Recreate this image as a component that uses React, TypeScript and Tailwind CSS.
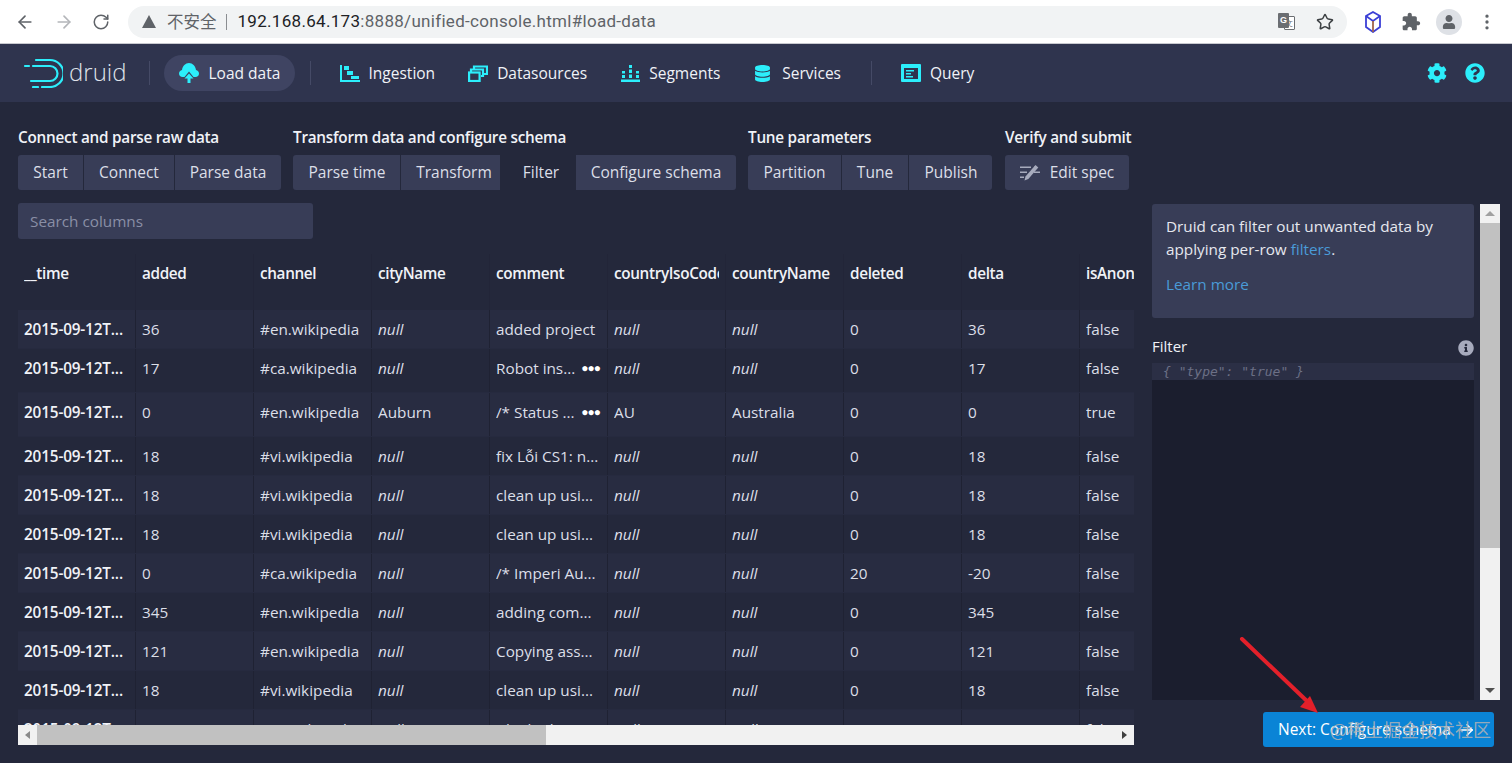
import { ArrowLeft, ArrowRight, RotateCw, Star, EllipsisVertical } from "lucide-react"
import { FaCog, FaDatabase, FaInfoCircle, FaQuestionCircle, FaUser } from "react-icons/fa"

const columns = ["__time", "added", "channel", "cityName", "comment", "countryIsoCode", "countryName", "deleted", "delta", "isAnonymous"]

const rows = [
  { added: "36", channel: "#en.wikipedia", city: "null", comment: "added project", iso: "null", country: "null", deleted: "0", delta: "36", anon: "false", h: "h-[39px]" },
  { added: "17", channel: "#ca.wikipedia", city: "null", comment: "Robot ins...", more: true, iso: "null", country: "null", deleted: "0", delta: "17", anon: "false", h: "h-[44px]" },
  { added: "0", channel: "#en.wikipedia", city: "Auburn", comment: "/* Status ...", more: true, iso: "AU", country: "Australia", deleted: "0", delta: "0", anon: "true", h: "h-[44px]" },
  { added: "18", channel: "#vi.wikipedia", city: "null", comment: "fix Lỗi CS1: n...", iso: "null", country: "null", deleted: "0", delta: "18", anon: "false", h: "h-[39px]" },
  { added: "18", channel: "#vi.wikipedia", city: "null", comment: "clean up usi...", iso: "null", country: "null", deleted: "0", delta: "18", anon: "false", h: "h-[39px]" },
  { added: "18", channel: "#vi.wikipedia", city: "null", comment: "clean up usi...", iso: "null", country: "null", deleted: "0", delta: "18", anon: "false", h: "h-[39px]" },
  { added: "0", channel: "#ca.wikipedia", city: "null", comment: "/* Imperi Au...", iso: "null", country: "null", deleted: "20", delta: "-20", anon: "false", h: "h-[39px]" },
  { added: "345", channel: "#en.wikipedia", city: "null", comment: "adding com...", iso: "null", country: "null", deleted: "0", delta: "345", anon: "false", h: "h-[39px]" },
  { added: "121", channel: "#en.wikipedia", city: "null", comment: "Copying ass...", iso: "null", country: "null", deleted: "0", delta: "121", anon: "false", h: "h-[39px]" },
  { added: "18", channel: "#vi.wikipedia", city: "null", comment: "clean up usi...", iso: "null", country: "null", deleted: "0", delta: "18", anon: "false", h: "h-[39px]" },
  { added: "0", channel: "#en.wikipedia", city: "null", comment: "Blanked pa...", iso: "null", country: "null", deleted: "0", delta: "0", anon: "false", h: "h-[39px]" },
]

const stepGroups = [
  { label: "Connect and parse raw data", steps: [["Start", "w-[65px]", ""], ["Connect", "w-[90px]", ""], ["Parse data", "w-[106px]", ""]] },
  { label: "Transform data and configure schema", steps: [["Parse time", "w-[107px]", "pl-px"], ["Transform", "w-[99px]", "pl-[7px]"], ["Filter", "w-[74px]", "pl-[6px]"], ["Configure schema", "w-[160px]", ""]] },
  { label: "Tune parameters", steps: [["Partition", "w-[93px]", ""], ["Tune", "w-[66px]", ""], ["Publish", "w-[83px]", "pl-px"]] },
]

function Logo() {
  return (
    <svg width="40" height="30" viewBox="0 0 40 30" fill="none" stroke="#2ceefb" strokeWidth="2.200" strokeLinecap="round">
      <path d="M13 2h14a13.500 13.500 0 0 1 0 27h-8" />
      <path d="M2 8h4M10 8h17a7.500 7.500 0 0 1 0 15h-19" />
      <path d="M10 29h5" />
    </svg>
  )
}

function LoadIcon() {
  return (
    <svg width="20" height="20" viewBox="0 0 20 20" fill="#2ceefb">
      <path d="M3.500 14C1.500 14 0 12.500 0 10.500 0 8.700 1.300 7.300 3 7 3.500 3 6.500 0 10 0c3.500 0 6.500 3 7 7 1.700.3 3 1.700 3 3.500 0 2-1.500 3.500-3.500 3.500h-2L10 8.500 5.500 14z" />
      <path d="M10 10.500l4.500 5h-3V20h-3v-4.500h-3z" />
    </svg>
  )
}

function IngestionIcon() {
  return (
    <svg width="20" height="17" viewBox="0 0 20 17" fill="#2ceefb">
      <path d="M0 0h2v15h18v2H0z" />
      <path d="M4 1h5v4H4zM7 6h6v4H7zM11 11h8v3h-8z" />
    </svg>
  )
}

function DatasourcesIcon() {
  return (
    <svg width="20" height="17" viewBox="0 0 20 17" fill="none" stroke="#2ceefb" strokeWidth="2.200">
      <path d="M6 4V1.500h13V9h-3" />
      <path d="M3 7V4.500h12V11h-2" />
      <rect x="1.100" y="7.500" width="10.500" height="8.500" />
    </svg>
  )
}

function SegmentsIcon() {
  return (
    <svg width="19" height="18" viewBox="0 0 19 18" fill="#2ceefb">
      <path d="M0 15.500h19V18H0z" />
      <path d="M1 7h3v2.500H1zM1 11h3v3H1zM8 1h3v3H8zM8 5.500h3V9H8zM8 10.500h3V14H8zM15 7h3v2.500h-3zM15 11h3v3h-3z" />
    </svg>
  )
}

function QueryIcon() {
  return (
    <svg width="20" height="18" viewBox="0 0 20 18">
      <rect width="20" height="18" rx="1" fill="#2ceefb" />
      <rect x="3" y="4" width="14" height="11" fill="#2f344e" />
      <path d="M5 6h8v1.500H5zM5 9h5v1.500H5zM5 12h7v1.500H5z" fill="#2ceefb" />
    </svg>
  )
}

function SpecIcon() {
  return (
    <svg width="20" height="17" viewBox="0 0 20 17" fill="#a7abbd" className="mr-[10px]">
      <path d="M0 2.500h11v1.600H0zM0 7.500h7v1.600H0zM0 12.500h4v1.600H0zM14 7.500h6v1.600h-6zM14 2.500h2v1.600h-2z" />
      <path d="M4.500 16.500l1-4L15.500 1l2.800 2.400-10 11.500z" />
    </svg>
  )
}

function TranslateIcon() {
  return (
    <div className="relative w-[18px] h-[18px] mr-[20px]">
      <span className="absolute left-[6px] top-[3px] w-[11px] h-[14px] bg-white border border-[#6b6e72] rounded-[1px] text-[8px] leading-[12px] text-right pr-px text-[#5f6368]">文</span>
      <span className="absolute left-0 top-0 w-[11px] h-[15px] rounded-[1px] bg-[#6b6e72] text-white text-[9px] leading-[15px] text-center font-['Liberation_Sans',sans-serif] font-bold">G</span>
    </div>
  )
}

function BrowserBar() {
  return (
    <div className="h-[44px] bg-white flex items-center border-b border-[#c8c9cf] shrink-0">
      <ArrowLeft size={20} className="ml-[15px] text-[#5f6368]" />
      <ArrowRight size={20} className="ml-[19px] text-[#b4b6ba]" />
      <RotateCw size={18} className="ml-[18px] text-[#5f6368]" />
      <div className="ml-[18px] w-[1219px] h-[32px] rounded-full bg-[#f1f3f4] flex items-center">
        <svg width="14" height="13" viewBox="0 0 14 13" className="ml-[14px]" fill="#5f6368">
          <path d="M7 0l7 13H0z" />
        </svg>
        <span className="ml-[11px] text-[16.500px] text-[#5f6368] font-['Noto_Sans_CJK_SC',sans-serif]">不安全</span>
        <span className="ml-[9px] w-px h-[16px] bg-[#8a8d91]" />
        <span className="ml-[11px] text-[17px] text-[#202124] font-['Roboto',sans-serif] tracking-[0.300px]">
          192.168.64.173<span className="text-[#5f6368]">:8888/unified-console.html#load-data</span>
        </span>
        <div className="ml-auto" />
        <TranslateIcon />
        <Star size={18} className="mr-[13px] text-[#3c4043]" />
      </div>
      <svg width="18" height="22" viewBox="0 0 18 22" fill="none" className="ml-[17px]" strokeWidth="1.800">
        <path d="M9 1l7 4v11l-7 5-7-5V5z" stroke="#3b3fd6" />
        <path d="M2 5l7 5 7-5" stroke="#3b3fd6" />
        <path d="M9 10v11" stroke="#a0644a" />
      </svg>
      <svg width="20" height="20" viewBox="0 0 24 24" fill="#5f6368" className="ml-[19px]">
        <path d="M20.500 11H19V7c0-1.100-.9-2-2-2h-4V3.500C13 2.120 11.880 1 10.500 1S8 2.120 8 3.500V5H4c-1.100 0-1.990.9-1.990 2v3.800H3.500c1.490 0 2.700 1.210 2.700 2.700s-1.210 2.700-2.700 2.700H2V20c0 1.100.9 2 2 2h3.800v-1.500c0-1.490 1.210-2.700 2.700-2.700 1.490 0 2.700 1.210 2.700 2.700V22H17c1.100 0 2-.9 2-2v-4h1.500c1.380 0 2.500-1.120 2.500-2.500S21.880 11 20.500 11z" />
      </svg>
      <div className="ml-[15px] w-[26px] h-[26px] rounded-full bg-[#dee1e6] flex items-center justify-center">
        <FaUser size={14} className="text-[#5f6368]" />
      </div>
      <EllipsisVertical size={20} className="ml-[15px] text-[#5f6368]" />
    </div>
  )
}

function NavItem({ icon, label, className }: { icon: React.ReactNode; label: string; className: string }) {
  return (
    <div className={`flex items-center gap-[9px] text-[15.500px] text-[#f0f2f7] ${className}`}>
      {icon}
      <span className="pt-[2px]">{label}</span>
    </div>
  )
}

function Navbar() {
  return (
    <div className="h-[58px] bg-[#2f344e] flex items-center shrink-0">
      <div className="ml-[23px]">
        <Logo />
      </div>
      <span className="ml-[6px] text-[24px] font-light text-[#dfe2ea] -mt-[3px]">druid</span>
      <span className="ml-[22px] w-px h-[24px] bg-[#454a66]" />
      <div className="ml-[14px] w-[131px] h-[36px] rounded-full bg-[#3f4462] flex items-center pl-[15px] gap-[10px] text-[15.500px] text-[#f0f2f7]">
        <LoadIcon />
        <span className="pt-[2px]">Load data</span>
      </div>
      <span className="ml-[15px] w-px h-[24px] bg-[#454a66]" />
      <NavItem icon={<IngestionIcon />} label="Ingestion" className="ml-[29px]" />
      <NavItem icon={<DatasourcesIcon />} label="Datasources" className="ml-[33px]" />
      <NavItem icon={<SegmentsIcon />} label="Segments" className="ml-[34px]" />
      <NavItem icon={<FaDatabase size={17} className="text-[#2ceefb]" />} label="Services" className="ml-[34px] gap-[11px]" />
      <span className="ml-[30px] w-px h-[24px] bg-[#454a66]" />
      <NavItem icon={<QueryIcon />} label="Query" className="ml-[29px]" />
      <FaCog size={20} className="ml-auto text-[#2ceefb]" />
      <FaQuestionCircle size={20} className="ml-[18px] mr-[27px] text-[#2ceefb]" />
    </div>
  )
}

function Steps() {
  return (
    <div className="flex gap-[12px] h-[78px] whitespace-nowrap">
      {stepGroups.map((group) => (
        <div key={group.label}>
          <div className="h-[30px] text-[15.300px] font-semibold text-[#f0f2f7] tracking-[-0.250px] leading-[24px]">{group.label}</div>
          <div className="flex gap-px">
            {group.steps.map(([name, width, pad], i) => (
              <div
                key={name}
                className={`${width} ${pad} h-[35px] flex items-center justify-center text-[15.500px] text-[#dcdfe8] ${name === "Filter" ? "" : "bg-[#383d57]"} ${i === 0 ? "rounded-l-[3px]" : ""} ${i === group.steps.length - 1 ? "rounded-r-[3px]" : ""}`}
              >
                {name}
              </div>
            ))}
          </div>
        </div>
      ))}
      <div className="ml-px">
        <div className="h-[30px] text-[15.300px] font-semibold text-[#f0f2f7] tracking-[-0.250px] leading-[24px]">Verify and submit</div>
        <div className="w-[124px] h-[35px] rounded-[3px] bg-[#383d57] flex items-center justify-center text-[15.500px] text-[#dcdfe8]">
          <SpecIcon />
          Edit spec
        </div>
      </div>
    </div>
  )
}

function Cell({ children, className = "" }: { children?: React.ReactNode; className?: string }) {
  return (
    <div className={`w-[118px] shrink-0 px-[6px] pt-[9px] leading-[20px] border-r border-[#1f2233] whitespace-nowrap ${className}`}>
      <div className="overflow-hidden">{children}</div>
    </div>
  )
}

function DataTable() {
  return (
    <div className="relative mt-[15px] h-[491px] overflow-hidden text-[15.300px] text-[#dcdfe8]">
      <div className="flex h-[56px] font-semibold text-[#f0f2f7] tracking-[-0.350px]">
        {columns.map((col) => (
          <Cell key={col} className="border-[#222538]">
            {col}
          </Cell>
        ))}
      </div>
      {rows.map((row, i) => (
        <div key={i} className={`flex ${row.h} border-b border-[#262a3f] ${i % 2 === 0 ? "bg-[#282c41]" : ""}`}>
          <Cell className="font-semibold text-[#f0f2f7] tracking-[-0.150px]">2015-09-12T...</Cell>
          <Cell>{row.added}</Cell>
          <Cell>{row.channel}</Cell>
          <Cell className={row.city === "null" ? "italic" : ""}>{row.city}</Cell>
          <Cell>
            <div className="flex items-center justify-between">
              <span>{row.comment}</span>
              {row.more && <span className="text-[12px] tracking-[-1px] text-white pr-px">●●●</span>}
            </div>
          </Cell>
          <Cell className={row.iso === "null" ? "italic" : ""}>{row.iso}</Cell>
          <Cell className={row.country === "null" ? "italic" : ""}>{row.country}</Cell>
          <Cell>{row.deleted}</Cell>
          <Cell>{row.delta}</Cell>
          <Cell>{row.anon}</Cell>
        </div>
      ))}
      {/* horizontal scrollbar sits over the last row */}
      <div className="absolute left-0 right-0 bottom-0 h-[20px] bg-[#f1f1f1] flex items-center">
        <div className="w-[19px] flex justify-center">
          <span className="border-y-[4px] border-r-[5px] border-y-transparent border-r-[#8a8a8a]" />
        </div>
        <div className="w-[509px] h-full bg-[#c1c1c1]" />
        <div className="ml-auto w-[19px] flex justify-center">
          <span className="border-y-[4px] border-l-[5px] border-y-transparent border-l-[#404040]" />
        </div>
      </div>
    </div>
  )
}

function FilterPanel() {
  return (
    <div className="ml-[18px] w-[348px] mt-[79px] shrink-0 flex flex-col">
      <div className="flex h-[496px]">
        <div className="w-[322px] flex flex-col">
          <div className="h-[114px] rounded-[3px] bg-[#383d57] px-[14px] pt-[11px] text-[15.300px] leading-[23px] text-[#e6e8ef]">
            <p>
              Druid can filter out unwanted data by applying per-row <span className="text-[#4a9bd8]">filters</span>.
            </p>
            <p className="mt-[12px] text-[#4a9bd8]">Learn more</p>
          </div>
          <div className="mt-[18px] h-[27px] flex items-start justify-between text-[15px] text-[#f0f2f7] leading-[20px]">
            <span>Filter</span>
            <FaInfoCircle size={16} className="mt-[4px] text-[#a7abbd]" />
          </div>
          <div className="flex-1 bg-[#1b1e2e]">
            <div className="h-[17px] bg-[#2b2f45] pl-[11px] text-[13px] leading-[17px] italic text-[#6c7086] font-['DejaVu_Sans_Mono',monospace]">
              {'{ "type": "true" }'}
            </div>
          </div>
        </div>
        <div className="ml-[6px] w-[20px] bg-[#f1f1f1] flex flex-col">
          <div className="h-[19px] flex items-center justify-center shrink-0">
            <span className="border-x-[5px] border-b-[5px] border-x-transparent border-b-[#a0a0a0]" />
          </div>
          <div className="h-[325px] bg-[#c1c1c1] shrink-0" />
          <div className="mt-auto h-[19px] flex items-center justify-center">
            <span className="border-x-[5px] border-t-[5px] border-x-transparent border-t-[#505050]" />
          </div>
        </div>
      </div>
      <div className="relative mt-[12px] ml-[111px] w-[231px] h-[35px] rounded-[3px] bg-[#0a84d6] flex items-center pl-[15px] text-[15.500px] text-white">
        Next: Configure schema
        <ArrowRight size={18} className="ml-[7px]" />
        {/* site watermark and the red annotation arrow lie over the button */}
        <span className="absolute left-[67px] top-[4px] text-[18px] text-[#a9b0b8]/90 whitespace-nowrap font-['Noto_Sans_CJK_SC',sans-serif]">@稀土掘金技术社区</span>
        <svg className="absolute left-[-24px] top-[-75px] pointer-events-none" width="84" height="80" viewBox="0 0 84 80" fill="none">
          <path d="M3 2L70 66" stroke="#e3202a" strokeWidth="4" strokeLinecap="round" />
          <path d="M79 76L61 70L71 59z" fill="#e3202a" />
        </svg>
      </div>
    </div>
  )
}

export default function App() {
  return (
    <div className="h-[763px] overflow-hidden bg-[#24283b] flex flex-col font-['Open_Sans',sans-serif]">
      <BrowserBar />
      <Navbar />
      <div className="flex pl-[18px] pt-[23px]">
        <div className="w-[1116px] shrink-0">
          <Steps />
          <div className="w-[295px] h-[36px] rounded-[3px] bg-[#383d57] pl-[12px] text-[15.300px] leading-[36px] text-[#8a8fa6]">Search columns</div>
          <DataTable />
        </div>
        <FilterPanel />
      </div>
    </div>
  )
}
